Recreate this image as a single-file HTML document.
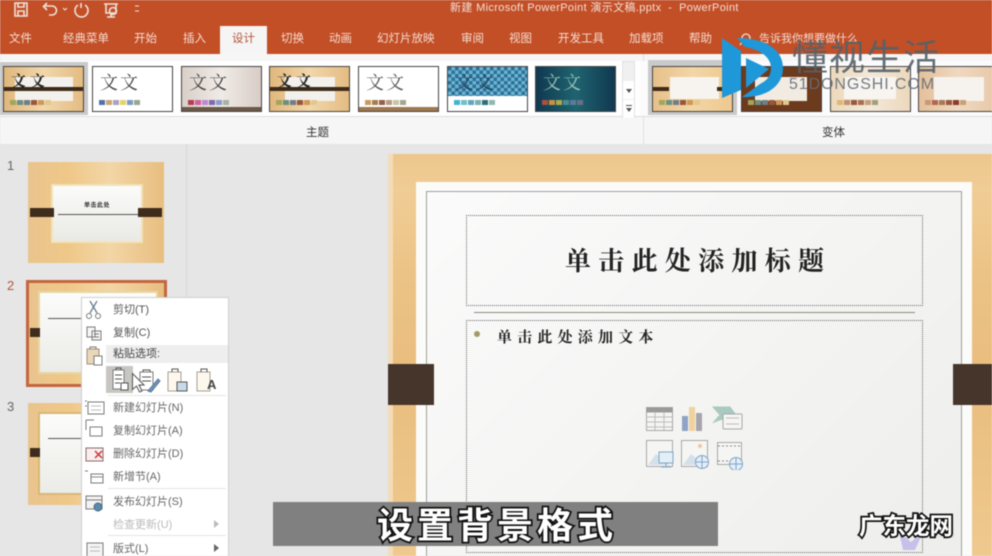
<!DOCTYPE html>
<html lang="zh"><head><meta charset="utf-8"><title>PowerPoint</title>
<style>
*{box-sizing:border-box}
html,body{margin:0;padding:0;width:992px;height:556px;overflow:hidden;background:#e6e6e6}
body{font-family:"Liberation Sans","Noto Sans CJK SC",sans-serif;position:relative}
#w{position:absolute;left:0;top:0;width:992px;height:556px;overflow:hidden;filter:blur(.5px)}
.a,.t{position:absolute}
.t{white-space:nowrap;line-height:1}
.tab{color:#f6dccf;font-size:11.5px;top:34px}
.th{position:absolute;top:66px;width:81px;height:46px;background:#fff;border:1px solid #444;overflow:hidden}
.th .wx{position:absolute;left:7px;top:7px;font-size:17px;line-height:1;letter-spacing:2px;color:#444;white-space:nowrap;font-family:"Liberation Serif","Noto Serif CJK SC",serif}
.sw{position:absolute;left:6px;top:33px;display:flex;gap:1px}
.sw i{display:block;width:6px;height:5px}
.wood{background:linear-gradient(90deg,#e9c48d,#efc888 30%,#f3d6a6 60%,#e8be80)}
.mi{position:absolute;left:113px;font-size:11px;color:#666;line-height:1;white-space:nowrap}
.sep{position:absolute;left:108px;width:118px;height:1px;background:#e4e4e4}
</style></head><body><div id="w">

<div class="a" style="left:0;top:0;width:992px;height:54px;background:#c34f27"></div>
<svg class="a" style="left:0;top:0" width="150" height="22" fill="none" stroke="#efe2da" stroke-width="1.6">
<path d="M15 3h12v13H15z M18 3v4h6V3 M18 16v-5h6v5"/>
<path d="M44 6h8a4 4 0 0 1 0 9h-3 M47 3l-3.500 3.500 3.500 3.500"/>
<path d="M63 8l2 2 2-2" stroke-width="1"/>
<path d="M78 5a6.500 6.500 0 1 0 7 0 M81 3v5"/>
<path d="M104 4h14 M106 4v9h10V4 M111 13v4 M107 17h8"/>
<circle cx="113" cy="11" r="3.500"/>
<path d="M135 6h4 M135 11h4" stroke-width="1"/>
</svg>
<span class="t" style="left:450px;top:3px;font-size:11px;color:#f3dfd5;letter-spacing:.35px">新建 Microsoft PowerPoint 演示文稿.pptx &nbsp;-&nbsp; PowerPoint</span>

<div class="a" style="left:220px;top:26px;width:47px;height:29px;background:#f5f5f5"></div>
<span class="t tab" style="left:9px">文件</span>
<span class="t tab" style="left:63px">经典菜单</span>
<span class="t tab" style="left:134px">开始</span>
<span class="t tab" style="left:183px">插入</span>
<span class="t tab" style="left:232px;color:#b5553a">设计</span>
<span class="t tab" style="left:281px">切换</span>
<span class="t tab" style="left:329px">动画</span>
<span class="t tab" style="left:377px">幻灯片放映</span>
<span class="t tab" style="left:461px">审阅</span>
<span class="t tab" style="left:509px">视图</span>
<span class="t tab" style="left:558px">开发工具</span>
<span class="t tab" style="left:629px">加载项</span>
<span class="t tab" style="left:689px">帮助</span>
<svg class="a" style="left:738px;top:32px" width="16" height="16" fill="none" stroke="#f6dccf" stroke-width="1.300"><circle cx="8" cy="6" r="4"/><path d="M5 9l-3 4"/></svg>
<span class="t tab" style="left:759px;font-size:11px">告诉我你想要做什么</span>

<div class="a" style="left:0;top:54px;width:992px;height:90px;background:#f6f6f6"></div>
<div class="a" style="left:0;top:61px;width:640px;height:56px;background:#fff;border-bottom:1px solid #ddd"></div>
<div class="a" style="left:0;top:62px;width:88px;height:53px;background:#c9c9c9"></div>
<div class="a" style="left:643px;top:54px;width:1px;height:90px;background:#e0e0e0"></div>
<div class="a" style="left:640px;top:61px;width:352px;height:56px;background:#fbfbfb;border-bottom:1px solid #ddd"></div>
<div class="a" style="left:648px;top:60px;width:89px;height:55px;background:#c9c9c9"></div>

<div class="th" style="left:3px;background:linear-gradient(90deg,#e0b77c,#f1d7ab 50%,#e4bc82)"><div class="a" style="left:11px;top:10px;width:58px;height:24px;background:#f3f1ee"></div><div class="a" style="left:0;top:20px;width:79px;height:4px;background:#3e2a18"></div><span class="wx" style="color:#222;font-weight:700;letter-spacing:4px;font-size:15px;top:8px">文文</span><div class="sw" style="top:33px"><i style="background:#a3a55a"></i><i style="background:#6e9080"></i><i style="background:#6f7f87"></i><i style="background:#98573a"></i><i style="background:#d09858"></i><i style="background:#e2c88e"></i></div></div>
<div class="th" style="left:92px"><span class="wx" style="font-size:18px">文文</span><div class="sw"><i style="background:#5470aa"></i><i style="background:#c8a878"></i><i style="background:#a8a4c0"></i><i style="background:#e6d268"></i><i style="background:#7c9cc4"></i><i style="background:#9ca68e"></i></div></div>
<div class="th" style="left:181px;background:linear-gradient(90deg,#d9cfc8,#f0ebe6 50%,#d8ccc6)"><span class="wx" style="font-size:18px">文文</span><div class="sw"><i style="background:#b23e50"></i><i style="background:#d060a0"></i><i style="background:#b88ad0"></i><i style="background:#7e6ab0"></i><i style="background:#8a9cc8"></i><i style="background:#a8b0a8"></i></div><div class="a" style="left:0;top:40px;width:79px;height:4px;background:#6b5a48"></div></div>
<div class="th" style="left:269px;background:linear-gradient(90deg,#e0b77c,#f1d7ab 50%,#e4bc82)"><div class="a" style="left:15px;top:10px;width:50px;height:24px;background:#f3f1ee"></div><div class="a" style="left:0;top:20px;width:79px;height:4px;background:#3e2a18"></div><span class="wx" style="color:#222;font-weight:700;letter-spacing:4px;font-size:15px;top:8px">文文</span><div class="sw"><i style="background:#a3a55a"></i><i style="background:#6e9080"></i><i style="background:#6f7f87"></i><i style="background:#98573a"></i><i style="background:#d09858"></i><i style="background:#e2c88e"></i></div></div>
<div class="th" style="left:358px"><span class="wx" style="font-size:18px;color:#555">文文</span><div class="sw"><i style="background:#c89a60"></i><i style="background:#a87c50"></i><i style="background:#96604c"></i><i style="background:#b89c80"></i><i style="background:#c8c4a8"></i><i style="background:#a0a890"></i></div><div class="a" style="left:0;top:40px;width:79px;height:4px;background:#a07850"></div></div>
<div class="th" style="left:447px;background:#fff"><div class="a" style="left:0;top:0;width:79px;height:29px;background:repeating-conic-gradient(#6ab4d4 0 25%,#2f7095 0 50%) 0 0/7px 7px"></div><span class="wx" style="color:#23405a;font-size:18px">文文</span><div class="sw"><i style="background:#40b4d0"></i><i style="background:#70c0c8"></i><i style="background:#60a8c0"></i><i style="background:#7ab0b0"></i><i style="background:#2c7080"></i><i style="background:#90b8b0"></i></div></div>
<div class="th" style="left:535px;background:linear-gradient(90deg,#103850,#1f6470 50%,#103850)"><span class="wx" style="color:#9fc6b8;font-size:18px">文文</span><div class="sw"><i style="background:#b05038"></i><i style="background:#c89040"></i><i style="background:#b0a848"></i><i style="background:#4c8c90"></i><i style="background:#5a7c98"></i><i style="background:#687088"></i></div></div>

<div class="a" style="left:622px;top:61px;width:13px;height:57px;background:#f0f0f0;border:1px solid #e2e2e2"></div>
<div class="a" style="left:623px;top:81px;width:11px;height:18px;background:#fff"></div>
<div class="a" style="left:623px;top:100px;width:11px;height:18px;background:#fff"></div>
<div class="a" style="left:626px;top:89px;border:3px solid transparent;border-top:4px solid #555"></div>
<div class="a" style="left:626px;top:105px;width:6px;height:1px;background:#555"></div>
<div class="a" style="left:626px;top:108px;border:3px solid transparent;border-top:4px solid #555"></div>

<div class="th" style="left:652px;background:linear-gradient(90deg,#e6c08a,#f3d6a6 50%,#eec88e)"><div class="a" style="left:17px;top:10px;width:49px;height:22px;background:#f7f3ee"></div><div class="a" style="left:0;top:20px;width:16px;height:4px;background:#3e2a18"></div><div class="a" style="left:64px;top:20px;width:15px;height:4px;background:#3e2a18"></div><div class="sw"><i style="background:#a3a55a"></i><i style="background:#6e9080"></i><i style="background:#6f7f87"></i><i style="background:#98573a"></i><i style="background:#d09858"></i><i style="background:#e2c88e"></i></div></div>
<div class="th" style="left:741px;background:#6c3a1c"><div class="a" style="left:13px;top:10px;width:52px;height:24px;background:#f1ebe2"></div><div class="sw"><i style="background:#a3a55a"></i><i style="background:#6e9080"></i><i style="background:#6f7f87"></i><i style="background:#98573a"></i><i style="background:#d09858"></i><i style="background:#e2c88e"></i></div></div>
<div class="th" style="left:830px;background:linear-gradient(90deg,#ecd8bc,#f3e8da 50%,#ecd8bc)"><div class="a" style="left:13px;top:10px;width:52px;height:22px;background:#f8f5f0"></div><div class="sw"><i style="background:#dcb870"></i><i style="background:#c09070"></i><i style="background:#985840"></i><i style="background:#a87050"></i><i style="background:#c8a078"></i><i style="background:#a0a080"></i></div></div>
<div class="th" style="left:918px;width:80px;background:linear-gradient(90deg,#e4c09a,#efd8c0 50%,#e8c8a8)"><div class="a" style="left:15px;top:10px;width:50px;height:24px;background:#f6f2ee"></div><div class="sw"><i style="background:#c89878"></i><i style="background:#b06850"></i><i style="background:#a87858"></i><i style="background:#985840"></i><i style="background:#8c3c28"></i><i style="background:#c8a078"></i></div></div>

<span class="t" style="left:306px;top:128px;font-size:11.5px;color:#333">主题</span>
<span class="t" style="left:822px;top:128px;font-size:11.5px;color:#333">变体</span>

<div class="a" style="left:186px;top:144px;width:1px;height:412px;background:#d6d6d6"></div>

<span class="t" style="left:7px;top:159px;font-size:13px;color:#666">1</span>
<span class="t" style="left:7px;top:279px;font-size:13px;color:#b5553a">2</span>
<span class="t" style="left:7px;top:400px;font-size:13px;color:#666">3</span>

<div class="a wood" style="left:28px;top:162px;width:136px;height:101px"></div>
<div class="a" style="left:51px;top:184px;width:92px;height:59px;background:linear-gradient(#fbfbf9,#e9e9e5);border:2px solid #f3e2b8"></div>
<div class="a" style="left:30px;top:208px;width:24px;height:9px;background:#3f2c1c"></div>
<div class="a" style="left:138px;top:208px;width:24px;height:9px;background:#3f2c1c"></div>
<div class="a" style="left:58px;top:214px;width:80px;height:1px;background:#555"></div>
<span class="t" style="left:84px;top:203px;font-size:6px;color:#333;font-weight:700;letter-spacing:.5px">单击此处</span>

<div class="a wood" style="left:26px;top:280px;width:141px;height:107px;border:3px solid #c4653f"></div>
<div class="a" style="left:38px;top:291px;width:120px;height:83px;background:linear-gradient(#fcfcfb,#ebebe7);border:2px solid #e8d6a4"></div>
<div class="a" style="left:30px;top:328px;width:10px;height:9px;background:#3f2c1c"></div>
<div class="a" style="left:48px;top:318px;width:60px;height:1px;background:#555"></div>

<div class="a wood" style="left:28px;top:403px;width:136px;height:102px"></div>
<div class="a" style="left:38px;top:412px;width:120px;height:83px;background:linear-gradient(#fcfcfb,#ebebe7);border:2px solid #d7b878"></div>
<div class="a" style="left:30px;top:448px;width:10px;height:9px;background:#3f2c1c"></div>
<div class="a" style="left:48px;top:438px;width:60px;height:1px;background:#555"></div>

<div class="a" style="left:388px;top:154px;width:604px;height:402px;background:linear-gradient(180deg,#edc68c,#f0cd96 9%,#ecc386 30%,#e9bd7e 55%,#efc98f 100%)"></div>
<div class="a" style="left:388px;top:154px;width:5px;height:402px;background:#f3dcb8"></div>
<div class="a" style="left:416px;top:182px;width:556px;height:374px;background:#fbfbfa"></div>
<div class="a" style="left:426px;top:191px;width:536px;height:365px;background:linear-gradient(135deg,#fbfbfb,#eeeeec);border:1px solid #a0a096;border-bottom:0"></div>
<div class="a" style="left:466px;top:215px;width:457px;height:91px;border:1px dotted #666"></div>
<div class="a" style="left:474px;top:312px;width:441px;height:1px;background:#8a8a78"></div>
<div class="a" style="left:466px;top:320px;width:457px;height:233px;border:1px dotted #666"></div>
<span class="t" style="left:565px;top:247px;font-size:26px;letter-spacing:7.300px;color:#222;font-weight:700;font-family:'Noto Serif CJK SC','WenQuanYi Zen Hei',serif">单击此处添加标题</span>
<div class="a" style="left:474px;top:331px;width:6px;height:6px;border-radius:50%;background:#a39a68"></div>
<span class="t" style="left:497px;top:329px;font-size:15px;letter-spacing:5.200px;color:#222;font-weight:700;font-family:'Noto Serif CJK SC','WenQuanYi Zen Hei',serif">单击此处添加文本</span>
<div class="a" style="left:388px;top:364px;width:46px;height:41px;background:#46352a"></div>
<div class="a" style="left:953px;top:364px;width:39px;height:41px;background:#46352a"></div>

<svg class="a" style="left:644px;top:404px" width="102" height="66" fill="none" stroke-width="1">
<rect x="2.500" y="3.500" width="26" height="23" fill="#f5f5f3" stroke="#a8a8a8"/><rect x="2.500" y="3.500" width="26" height="5" fill="#9a9a9a"/><path d="M2 13h26M2 18h26M2 23h26M11 8v18M20 8v18" stroke="#bcbcbc"/>
<rect x="38" y="12" width="6" height="15" fill="#8ea4c4"/><rect x="45" y="3" width="6" height="24" fill="#efd29c"/><rect x="52" y="9" width="6" height="18" fill="#a8a4ac"/>
<path d="M69 3h17l6 8H76l-7-8zM69 19l6-7H88" fill="#a8cac0" stroke="#a8cac0"/><rect x="79" y="10" width="19" height="15" rx="1" fill="#f5f5f3" stroke="#a8a8a8"/><path d="M82 14h13M82 20h13" stroke="#bcbcbc"/>
<rect x="2.500" y="36.500" width="26" height="26" fill="#f5f5f3" stroke="#a8a8a8"/><path d="M4 61l8-11 14 11z" fill="#d4e0ea"/><rect x="15" y="48" width="14" height="11" fill="#e4eef6" stroke="#7ea6c8"/><path d="M22 59v3M17 63h10" stroke="#7ea6c8"/>
<rect x="37.500" y="36.500" width="26" height="26" fill="#f5f5f3" stroke="#a8a8a8"/><path d="M39 61l8-11 14 11z" fill="#d4e0ea"/><circle cx="58" cy="58" r="6.500" fill="#e4eef6" stroke="#7ea6c8"/><path d="M51 58h14M58 51v14" stroke="#7ea6c8"/><circle cx="56" cy="42" r="2" fill="#f0c8a0"/>
<rect x="73.500" y="38.500" width="24" height="22" fill="#f5f5f3" stroke="#a8a8a8"/><path d="M74 42h23M74 57h23" stroke="#8a8a8a" stroke-dasharray="2 2"/><circle cx="92" cy="60" r="6.500" fill="#e4eef6" stroke="#7ea6c8"/><path d="M85 60h14M92 53v14" stroke="#7ea6c8"/>
</svg>

<div class="a" style="left:81px;top:297px;width:148px;height:262px;background:#fff;border:1px solid #cfcfcf"></div>
<div class="a" style="left:106px;top:345px;width:122px;height:18px;background:#eeeeee"></div>
<div class="a" style="left:106px;top:366px;width:27px;height:27px;background:#c8c6c2"></div>
<span class="mi" style="top:305px;color:#555">剪切(T)</span>
<span class="mi" style="top:328px;color:#555">复制(C)</span>
<span class="mi" style="top:349px;color:#444">粘贴选项:</span>
<span class="mi" style="top:403px">新建幻灯片(N)</span>
<span class="mi" style="top:426px">复制幻灯片(A)</span>
<span class="mi" style="top:449px">删除幻灯片(D)</span>
<span class="mi" style="top:472px">新增节(A)</span>
<span class="mi" style="top:497px">发布幻灯片(S)</span>
<span class="mi" style="top:520px;color:#bbb">检查更新(U)</span>
<span class="mi" style="top:544px">版式(L)</span>
<div class="sep" style="top:395px"></div><div class="sep" style="top:488px"></div><div class="sep" style="top:535px"></div>
<div class="a" style="left:214px;top:520px;border:4px solid transparent;border-left:5px solid #bbb"></div>
<div class="a" style="left:214px;top:544px;border:4px solid transparent;border-left:5px solid #666"></div>

<svg class="a" style="left:82px;top:298px" width="140" height="258" fill="none" stroke="#7a7a7a" stroke-width="1">
<circle cx="7" cy="18" r="2.500"/><circle cx="16" cy="18" r="2.500"/><path d="M8 15L15 3M15 15L8 3" stroke="#6c7f90" stroke-width="1.300"/>
<path d="M5 29h8v10H5zM10 33h9v9h-9z" fill="#f6f6f6"/><path d="M12 36h5M12 39h5"/>
<path d="M5 51h12v15H5z" fill="#e8d8b8" stroke="#a09078"/><path d="M8 51v-2h6v2" /><rect x="12" y="58" width="8" height="9" fill="#fff"/>
<path d="M31 72h11v19H31z" fill="#fff"/><path d="M34 72v-2h5v2M33 77h7M33 81h7M33 85h5" stroke="#555"/><path d="M39 85h7v7h-7z" fill="#fff" stroke="#555"/>
<path d="M58 74h13v18H58z" fill="#fff"/><path d="M61 74v-2h7v2M60 79h9M60 83h9" stroke="#555"/><path d="M66 93l10-12 2 2-9 11z" fill="#6f92b4" stroke="#5a7a9a"/>
<path d="M86 74h13v19H86z" fill="#fdf8ee" stroke="#a8a090"/><path d="M90 74v-3h6v3" stroke="#555"/><rect x="95" y="84" width="10" height="9" fill="#c8dae8" stroke="#555"/>
<path d="M115 74h13v19h-13z" fill="#fdf8ee" stroke="#a8a090"/><path d="M119 74v-3h6v3" stroke="#555"/>
<path d="M6 104h16v12H6z M3 103h2M3 108h2" /><path d="M9 108h10M9 112h10" stroke="#bbb"/>
<path d="M8 129h12v9H8zM4 122h8M4 122v10"/>
<path d="M4 150h17v13H4z" fill="#fbeeee" stroke="#8a6a6a"/><path d="M13 153l7 7M20 153l-7 7" stroke="#c83a3a" stroke-width="1.500"/>
<path d="M9 176h12v9H9z M3 173h3" /><path d="M9 179h12" stroke="#888"/>
<path d="M4 198h16v13H4z" fill="#f2f2f2"/><circle cx="16" cy="209" r="4" fill="#5b8aa8" stroke="#3e6a88"/><path d="M4 202h16"/>
<path d="M5 245h16v14H5z" fill="#f4f4f4"/><path d="M8 249h10M8 253h10" stroke="#bbb"/>
</svg>
<span class="t" style="left:207px;top:378px;font-size:13px;font-weight:700;color:#444">A</span>
<svg class="a" style="left:131px;top:372px" width="16" height="22"><path d="M1.500 1.500v16l4-3.500 3 6 2.500-1-3-6h5z" fill="#fff" stroke="#555"/></svg>

<svg class="a" style="left:720px;top:36px" width="66" height="64" fill="#1e98d8">
<path d="M2 2l19 13v39L2 62z"/>
<path d="M17 2c26 0 46 10 46 30S43 62 22 61l18-13c8-4 11-9 11-16 0-12-13-19-26-21z"/>
<path d="M26 22l23 11-23 19z"/>
</svg>
<span class="t" style="left:792px;top:40px;font-size:36px;letter-spacing:1px;color:rgba(85,97,105,.9);font-weight:400">懂视生活</span>
<span class="t" style="left:789px;top:77px;font-size:16px;letter-spacing:.9px;color:rgba(100,110,120,.9);white-space:nowrap">51DONGSHI.COM</span>

<div class="a" style="left:273px;top:502px;width:445px;height:44px;background:#808080"></div>
<span class="t" style="left:377px;top:508px;font-size:36px;letter-spacing:4px;color:#fff;font-weight:700;-webkit-text-stroke:3.500px #111;paint-order:stroke fill">设置背景格式</span>

<svg class="a" style="left:897px;top:530px" width="28" height="22"><path d="M2 2l12 10 12-10-8 18H6z" fill="#c8c0e8"/></svg>
<span class="t" style="left:928px;top:525px;font-size:14px;color:#ddd;opacity:.7">生活</span>
<span class="t" style="left:859px;top:515px;font-size:23.500px;color:#fff;font-weight:700;-webkit-text-stroke:3.500px #111;paint-order:stroke fill">广东龙网</span>

</div></body></html>
